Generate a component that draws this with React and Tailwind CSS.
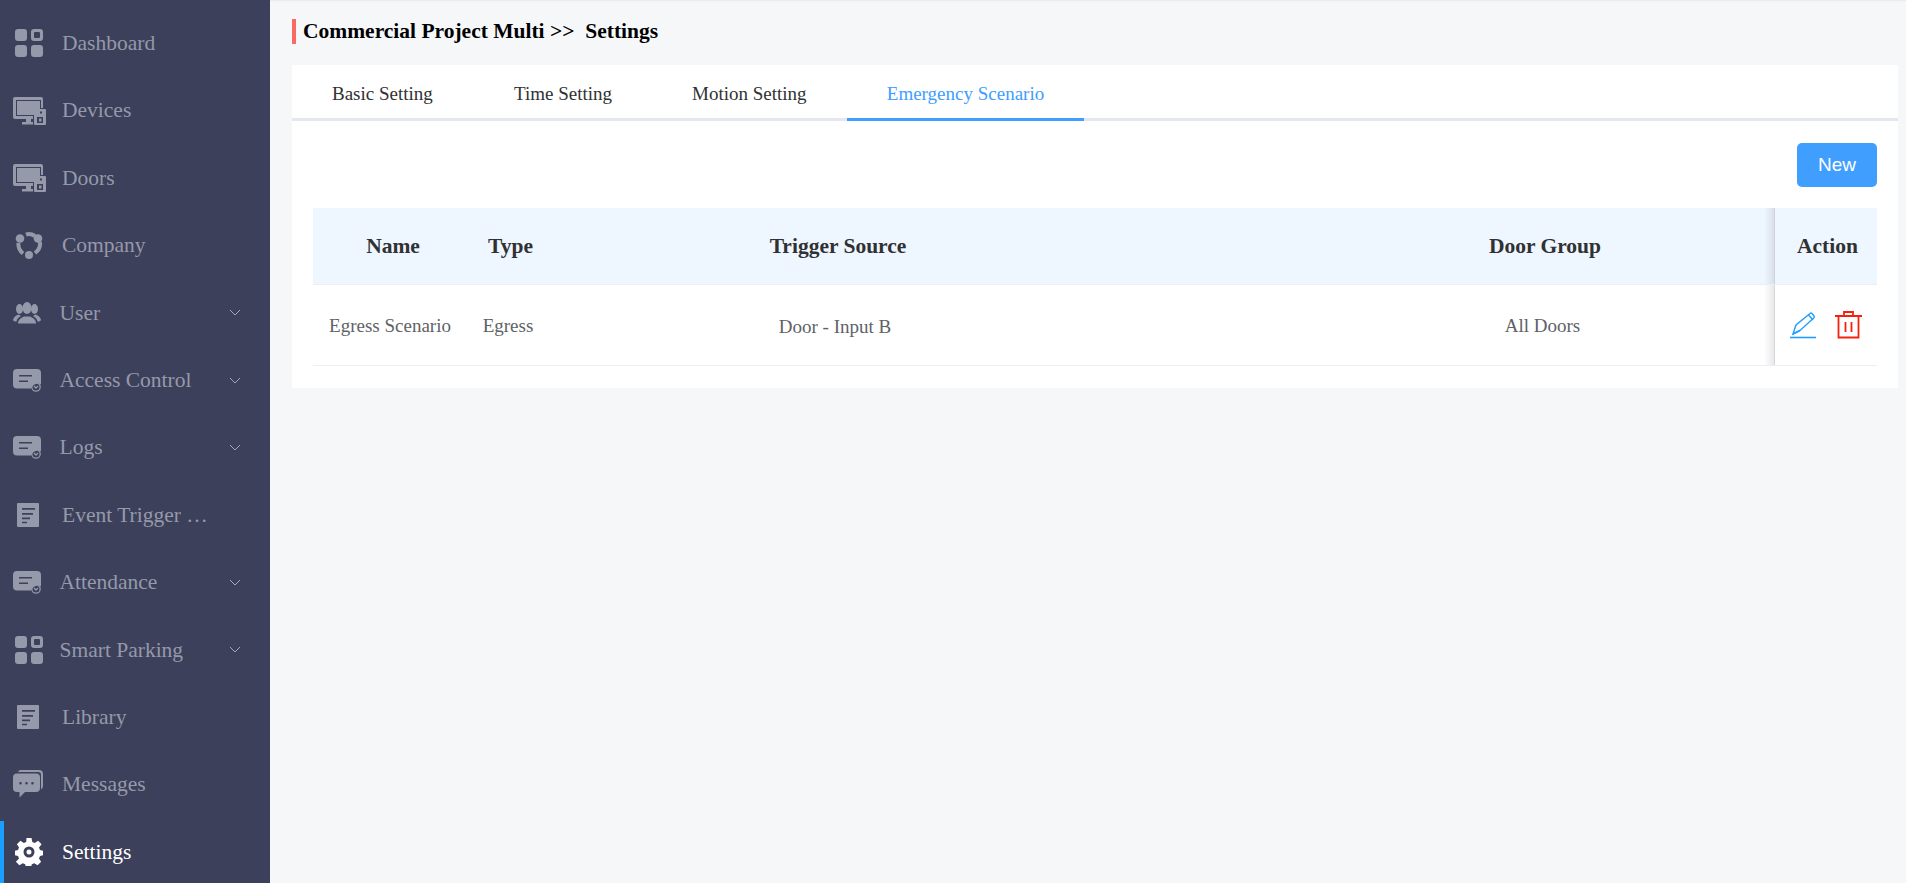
import React from 'react';

const GridIcon = () => (
  <svg width="28" height="28" viewBox="0 0 28 28" fill="currentColor" className="ml-[2px]">
    <rect x="0" y="0" width="12" height="12" rx="3" />
    <path fillRule="evenodd" d="M19 0h6a3 3 0 0 1 3 3v6a3 3 0 0 1-3 3h-6a3 3 0 0 1-3-3V3a3 3 0 0 1 3-3Zm1 3a1 1 0 0 0-1 1v4a1 1 0 0 0 1 1h4a1 1 0 0 0 1-1V4a1 1 0 0 0-1-1Z" />
    <rect x="0" y="16" width="12" height="12" rx="3" />
    <rect x="16" y="16" width="12" height="12" rx="3" />
  </svg>
);

const DeviceIcon = () => (
  <svg width="33" height="28" viewBox="0 0 33 28" fill="currentColor">
    <path fillRule="evenodd" d="M2 0h26a2 2 0 0 1 2 2v9h-2V3H3v16h17v3H2a2 2 0 0 1-2-2V2a2 2 0 0 1 2-2Z" />
    <rect x="4" y="4" width="23" height="14" />
    <path d="M9 25h4v-3h5v3h2v2.500H9Z" />
    <path fillRule="evenodd" d="M22 12h10a1 1 0 0 1 1 1v14a1 1 0 0 1-1 1H22a1 1 0 0 1-1-1V13a1 1 0 0 1 1-1Zm3 2.500v2h4v-2Zm-1 5.500v6h6v-6Zm2 1.500h2.500v3H26Z" />
  </svg>
);

const CompanyIcon = () => (
  <svg width="28" height="28" viewBox="0 0 28 28" fill="none" stroke="currentColor" className="ml-[2px]">
    <path d="M3.500 12c-.500 4 1.500 8 4.500 10.500M11 3.500c3-1 6-.500 9 1.500M25 11c.500 4-1 8-5 11" strokeWidth="4" />
    <circle cx="5" cy="7.500" r="4.300" fill="currentColor" strokeWidth="0" />
    <circle cx="23" cy="7.500" r="4.300" fill="currentColor" strokeWidth="0" />
    <circle cx="14" cy="24" r="4" fill="currentColor" strokeWidth="0" />
  </svg>
);

const UserIcon = () => (
  <svg width="28" height="22" viewBox="0 0 28 22" fill="currentColor">
    <ellipse cx="14" cy="6" rx="4.500" ry="6" />
    <path d="M5 21.500c0-4 3-5.500 6-7h6c3 1.500 6 3 6 7Z" />
    <ellipse cx="6.500" cy="7" rx="3.500" ry="5" />
    <ellipse cx="21.500" cy="7" rx="3.500" ry="5" />
    <path d="M0 18c.500-3 3-4.500 5.500-5.500L8 14c-3 1.500-4 3-4.500 5.500C2 19.500.500 19 0 18ZM28 18c-.500-3-3-4.500-5.500-5.500L20 14c3 1.500 4 3 4.500 5.500 1.500 0 3-.500 3.500-1.500Z" />
  </svg>
);

const CardIcon = () => (
  <svg width="28" height="23" viewBox="0 0 28 23" fill="currentColor">
    <path fillRule="evenodd" d="M4 0h20a4 4 0 0 1 4 4v11.500a7 7 0 0 0-10 4H4a4 4 0 0 1-4-4V4a4 4 0 0 1 4-4Zm2 6v1.500h13V6Zm0 5.500V13h9v-1.500Z" />
    <circle cx="23" cy="18" r="4.200" fill="none" stroke="currentColor" strokeWidth="1.300" />
    <path d="M21 17l2 2 2-2" fill="none" stroke="currentColor" strokeWidth="1.300" />
  </svg>
);

const DocIcon = () => (
  <svg width="22" height="24" viewBox="0 0 22 24" fill="currentColor" className="ml-[4px]">
    <path fillRule="evenodd" d="M1 0h20a1 1 0 0 1 1 1v22a1 1 0 0 1-1 1H1a1 1 0 0 1-1-1V1a1 1 0 0 1 1-1Zm4 5v1.800h13V5Zm0 5v1.800h11V10Zm0 4.500v1.800h8v-1.800Zm0 4.300v1.400h5v-1.400Z" />
  </svg>
);

const MessageIcon = () => (
  <svg width="30" height="28" viewBox="0 0 30 28" fill="currentColor">
    <path d="M7 0h19a4 4 0 0 1 4 4v12a4 4 0 0 1-2 3.500V5a3 3 0 0 0-3-3H5a4 4 0 0 1 2-2Z" />
    <path fillRule="evenodd" d="M4 3.500h19a4 4 0 0 1 4 4V18a4 4 0 0 1-4 4H12l-5.500 5.500V22H4a4 4 0 0 1-4-4V7.500a4 4 0 0 1 4-4Zm3.500 8.500a1.300 1.300 0 1 0 0 2.600 1.300 1.300 0 0 0 0-2.600Zm6 0a1.300 1.300 0 1 0 0 2.600 1.300 1.300 0 0 0 0-2.600Zm6 0a1.300 1.300 0 1 0 0 2.600 1.300 1.300 0 0 0 0-2.600Z" />
  </svg>
);

const GearIcon = () => (
  <svg width="28" height="28" viewBox="0 0 28 28" fill="currentColor" className="ml-[2px]">
    <path fillRule="evenodd" d="M11.500 0h5l.8 4 2.400 1 3.400-2.300 3.500 3.500L24 9.600l1 2.400 3 .8v4.400l-3 .8-1 2.400 2.100 3.400-3.500 3.500-3.400-2.100-2.400 1-.8 3.800h-5l-.8-3.800-2.400-1-3.400 2.100-3.500-3.500L4 20.400l-1-2.400-3-.8v-4.400l3-.8 1-2.400-2.100-3.400 3.500-3.500 3.400 2.300 2.400-1ZM14 8.500a5.500 5.500 0 1 0 0 11 5.500 5.500 0 0 0 0-11Zm0 3a2.500 2.500 0 1 1 0 5 2.500 2.500 0 0 1 0-5Z" />
  </svg>
);

const Chevron = () => (
  <svg width="12" height="7" viewBox="0 0 12 7" fill="none" stroke="currentColor" strokeWidth="1" className="text-[#a5a8b6]">
    <path d="M1 1l5 5 5-5" />
  </svg>
);

const PenIcon = () => (
  <svg width="27" height="28" viewBox="0 0 27 28" fill="none" stroke="#1e9fff" strokeWidth="1.400">
    <path d="M3 23 6 14 20 2.500a1.500 1.500 0 0 1 2 0l2 2.500a1.500 1.500 0 0 1-.3 2L10 19.500Z" />
    <path d="M18.500 4l4.500 5M3 23l7-3.500" />
    <path d="M0 26.500h26" strokeWidth="1.600" />
  </svg>
);

const TrashIcon = () => (
  <svg width="27" height="28" viewBox="0 0 27 28" fill="none" stroke="#f5200f" strokeWidth="1.800">
    <path d="M0 5h27M9 5V1h9v4M3.500 5v21.500h20V5M10.500 11v10M16.500 11v10" />
  </svg>
);

const menuItems = [
  { label: 'Dashboard', icon: GridIcon },
  { label: 'Devices', icon: DeviceIcon },
  { label: 'Doors', icon: DeviceIcon },
  { label: 'Company', icon: CompanyIcon },
  { label: 'User', icon: UserIcon, sub: true },
  { label: 'Access Control', icon: CardIcon, sub: true },
  { label: 'Logs', icon: CardIcon, sub: true },
  { label: 'Event Trigger …', icon: DocIcon },
  { label: 'Attendance', icon: CardIcon, sub: true },
  { label: 'Smart Parking', icon: GridIcon, sub: true },
  { label: 'Library', icon: DocIcon },
  { label: 'Messages', icon: MessageIcon },
  { label: 'Settings', icon: GearIcon, active: true },
];

const tabs = [
  { label: 'Basic Setting', width: 'w-[182px]' },
  { label: 'Time Setting', width: 'w-[178px]' },
  { label: 'Motion Setting', width: 'w-[155px]' },
  { label: 'Emergency Scenario', width: 'w-[237px]', active: true },
];

const Sidebar = () => (
  <aside className="w-[270px] shrink-0 h-[883px] overflow-hidden bg-[#3c405b] pt-[9.5px]">
    {menuItems.map(item => (
      <div
        key={item.label}
        className={`h-[67.4px] flex items-center pl-[13px] pr-[29px] relative text-[21.5px] ${item.active ? 'text-white' : 'text-[#9599aa]'}`}
      >
        {item.active && <span className="absolute left-0 top-[3px] h-[70px] w-[4px] bg-[#1a9fff]" />}
        <div className={`shrink-0 flex items-center ${item.sub ? 'w-[46.500px]' : 'w-[49px]'}`}>
          <item.icon />
        </div>
        <span className="flex-1 whitespace-nowrap">{item.label}</span>
        {item.sub && <Chevron />}
      </div>
    ))}
  </aside>
);

export default function App() {
  return (
    <div className="flex h-[883px] overflow-hidden bg-[#f6f7f9] font-['Liberation_Serif',serif]">
      <Sidebar />
      <main className="flex-1 pl-[22px] pr-[8px] pt-[19px] shadow-[inset_0_2px_2px_-1px_rgba(0,0,0,0.06)]">
        <div className="h-[25px] flex items-center border-l-[4px] border-[#fb6a63] pl-[7px] text-[21.5px] font-bold text-black whitespace-pre">
          Commercial Project Multi {'>>'}  Settings
        </div>

        <section className="mt-[21px] bg-white h-[323px]">
          <div className="h-[56px] flex border-b-[3px] border-[#e4e7ed] text-[19px] text-[#303133] pl-[40px]">
            {tabs.map(tab => (
              <div
                key={tab.label}
                className={`h-[56px] pt-[5px] flex items-center whitespace-nowrap border-b-[3px] ${tab.width} ${tab.active ? 'justify-center border-[#409eff] text-[#409eff]' : 'border-transparent'}`}
              >
                {tab.label}
              </div>
            ))}
          </div>

          <div className="px-[21px] pt-[22px]">
            <div className="flex justify-end">
              <button className="w-[80px] h-[44px] rounded-[5px] bg-[#409eff] text-white text-[19px] font-['Liberation_Sans',sans-serif]">
                New
              </button>
            </div>

            <div className="mt-[21px] text-[#303133]">
              <div className="flex h-[77px] items-center bg-[#eef6ff] border-b border-[#ebeef5] text-[21.5px] font-bold text-center">
                <div className="w-[160px]">Name</div>
                <div className="w-[75px]">Type</div>
                <div className="w-[768px] pr-[188px]">Trigger Source</div>
                <div className="flex-1">Door Group</div>
                <div className="relative w-[103px] h-full pl-[3px] flex items-center justify-center border-l border-[#e4e7ed]">
                  <span className="absolute right-full top-0 bottom-0 w-[11px] bg-gradient-to-l from-black/10 to-transparent" />
                  Action
                </div>
              </div>
              <div className="flex h-[81px] items-center border-b border-[#ebeef5] text-[19px] text-[#606266] text-center">
                <div className="w-[160px] pt-[2px] pr-[6px]">Egress Scenario</div>
                <div className="w-[75px] pt-[2px] pr-[5px]">Egress</div>
                <div className="w-[768px] pt-[4px] pr-[194px]">Door - Input B</div>
                <div className="flex-1 pt-[2px] pr-[5px]">All Doors</div>
                <div className="relative w-[103px] h-full flex items-center justify-center gap-[18px] border-l border-[#ebeef5]">
                  <span className="absolute right-full top-0 bottom-0 w-[11px] bg-gradient-to-l from-black/10 to-transparent" />
                  <PenIcon />
                  <TrashIcon />
                </div>
              </div>
            </div>
          </div>
        </section>
      </main>
    </div>
  );
}
